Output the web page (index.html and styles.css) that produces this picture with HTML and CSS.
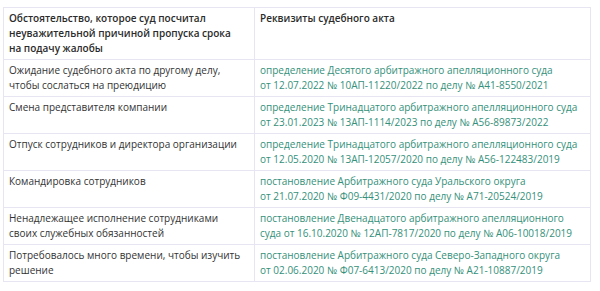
FILE: index.html
```html
<!DOCTYPE html>
<html lang="ru">
<head>
<meta charset="utf-8">
<link rel="stylesheet" href="styles.css">
</head>
<body>
<div class="wrap">
<table class="acts">
  <thead>
    <tr>
      <th class="c1">Обстоятельство, которое суд посчитал<br>неуважительной причиной пропуска срока<br>на подачу жалобы</th>
      <th class="c2">Реквизиты судебного акта</th>
    </tr>
  </thead>
  <tbody>
    <tr>
      <td>Ожидание судебного акта по другому делу,<br>чтобы сослаться на преюдицию</td>
      <td class="link">определение Десятого арбитражного апелляционного суда<br>от 12.07.2022 № 10АП-11220/2022 по делу № А41-8550/2021</td>
    </tr>
    <tr>
      <td>Смена представителя компании</td>
      <td class="link">определение Тринадцатого арбитражного апелляционного суда<br>от 23.01.2023 № 13АП-1114/2023 по делу № А56-89873/2022</td>
    </tr>
    <tr>
      <td>Отпуск сотрудников и директора организации</td>
      <td class="link">определение Тринадцатого арбитражного апелляционного суда<br>от 12.05.2020 № 13АП-12057/2020 по делу № А56-122483/2019</td>
    </tr>
    <tr>
      <td>Командировка сотрудников</td>
      <td class="link">постановление Арбитражного суда Уральского округа<br>от 21.07.2020 № Ф09-4431/2020 по делу № А71-20524/2019</td>
    </tr>
    <tr>
      <td>Ненадлежащее исполнение сотрудниками<br>своих служебных обязанностей</td>
      <td class="link">постановление Двенадцатого арбитражного апелляционного<br>суда от 16.10.2020 № 12АП-7817/2020 по делу № А06-10018/2019</td>
    </tr>
    <tr>
      <td>Потребовалось много времени, чтобы изучить<br>решение</td>
      <td class="link">постановление Арбитражного суда Северо-Западного округа<br>от 02.06.2020 № Ф07-6413/2020 по делу № А21-10887/2019</td>
    </tr>
  </tbody>
</table>
</div>
</body>
</html>
```

FILE: styles.css
```css
html, body {
  margin: 0;
  padding: 0;
  background: #ffffff;
}
.wrap {
  padding: 7px 0 0 3px;
}
.acts {
  border-collapse: collapse;
  width: 588px;
  table-layout: fixed;
  font-family: "Open Sans", "Noto Sans", sans-serif;
  font-size: 10px;
  line-height: 15px;
  color: #333333;
}
.acts th, .acts td {
  border: 1px solid #e7e5f1;
  padding: 3px 5px 3px 5px;
  text-align: left;
  vertical-align: top;
  white-space: nowrap;
}
.acts th {
  font-weight: 600;
  color: #2b2b2b;
}
.c1 { width: 240px; }
.acts td.link {
  color: #34907a;
}
```
